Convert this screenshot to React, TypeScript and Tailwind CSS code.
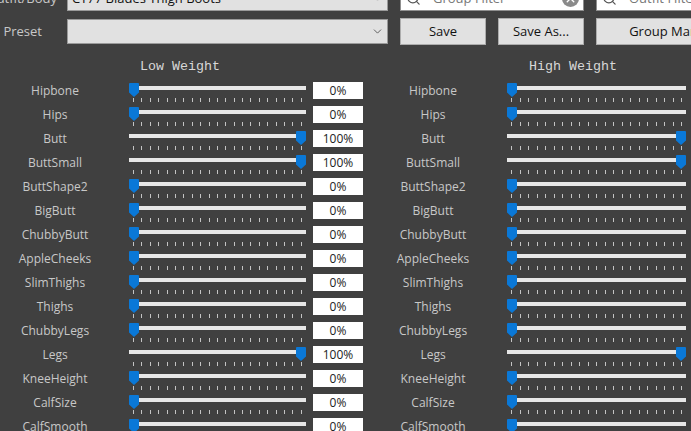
import { Search, X, ChevronDown } from 'lucide-react';

const rows = [
  { name: 'Hipbone', value: 0 },
  { name: 'Hips', value: 0 },
  { name: 'Butt', value: 100 },
  { name: 'ButtSmall', value: 100 },
  { name: 'ButtShape2', value: 0 },
  { name: 'BigButt', value: 0 },
  { name: 'ChubbyButt', value: 0 },
  { name: 'AppleCheeks', value: 0 },
  { name: 'SlimThighs', value: 0 },
  { name: 'Thighs', value: 0 },
  { name: 'ChubbyLegs', value: 0 },
  { name: 'Legs', value: 100 },
  { name: 'KneeHeight', value: 0 },
  { name: 'CalfSize', value: 0 },
  { name: 'CalfSmooth', value: 0 },
];

const ticks = Array.from({ length: 21 }, (_, i) => i);

function Combo({ text }: { text: string }) {
  return (
    <div className="flex h-[25px] w-[321px] shrink-0 items-center justify-between border border-[#9a9a9a] bg-[#e1e1e1] pl-[4px] pr-[3px] text-[13px] leading-none text-[#111]">
      <span>{text}</span>
      <ChevronDown className="h-[13px] w-[13px] text-[#444]" strokeWidth={1.5} />
    </div>
  );
}

function FilterBox({ text, width, clear }: { text: string; width: string; clear?: boolean }) {
  return (
    <div className={`flex h-[25px] shrink-0 items-center border border-[#8f8f8f] bg-white pl-[5px] pr-[4px] text-[13px] text-[#777] ${width}`}>
      <Search className="mr-[12px] h-[15px] w-[15px] text-[#555]" strokeWidth={2} />
      <span className="flex-1 whitespace-nowrap">{text}</span>
      {clear && (
        <span className="flex h-[17px] w-[17px] items-center justify-center rounded-full bg-[#8a8a8a]">
          <X className="h-[13px] w-[13px] text-white" strokeWidth={2.5} />
        </span>
      )}
    </div>
  );
}

function ActionButton({ text, width }: { text: string; width: string }) {
  return (
    <div className={`flex h-[27px] shrink-0 items-center justify-center whitespace-nowrap border border-[#adadad] bg-[#e1e1e1] text-[13px] text-[#111] ${width}`}>
      {text}
    </div>
  );
}

function Slider({ full, width }: { full: boolean; width: string }) {
  return (
    <div className={`flex shrink-0 flex-col ${width}`}>
      <div className={`flex h-[14px] items-start ${full ? 'flex-row-reverse' : ''}`}>
        <svg width="10" height="14" viewBox="0 0 10 14" className="shrink-0">
          <path d="M0 1 Q0 0 1 0 H9 Q10 0 10 1 V9.5 L5 14 L0 9.5 Z" fill="#0a78d7" />
        </svg>
        <div className="mt-[3px] h-[4px] flex-1 bg-[#e7e7e7]" />
      </div>
      <div className="mt-[1px] flex justify-between px-[4px]">
        {ticks.map((t) => (
          <span key={t} className="h-[4px] w-px bg-[#c4c4c4]" />
        ))}
      </div>
    </div>
  );
}

function SliderRow({ name, value, showBox }: { name: string; value: number; showBox: boolean }) {
  return (
    <div className="flex h-[24px] items-start">
      <div className="w-[110px] shrink-0 text-center text-[12px] leading-[17px] text-[#c8c8c8]">{name}</div>
      <div className="ml-[19px] mt-[1px]">
        <Slider full={value === 100} width={showBox ? 'w-[177px]' : 'w-[179px]'} />
      </div>
      {showBox && (
        <div className="ml-[7px] flex h-[17px] w-[50px] shrink-0 items-center justify-center bg-white text-[12px] leading-none text-[#222]">
          {value}%
        </div>
      )}
    </div>
  );
}

function WeightColumn({ title, titleClass, showBox }: { title: string; titleClass: string; showBox: boolean }) {
  return (
    <div className={showBox ? 'w-[378px] shrink-0' : 'flex-1'}>
      <div className={`font-['Liberation_Mono',monospace] text-[13.33px] leading-[16px] text-[#d8d8d8] ${titleClass}`}>
        {title}
      </div>
      <div className="mt-[7px]">
        {rows.map((r) => (
          <SliderRow key={r.name} name={r.name} value={r.value} showBox={showBox} />
        ))}
      </div>
    </div>
  );
}

export default function App() {
  return (
    <div className="h-[431px] w-[691px] overflow-hidden bg-[#404040] font-['Open_Sans','Noto_Sans',sans-serif]">
      <div className="-mt-[14px] flex items-center">
        <div className="flex w-[57px] shrink-0 justify-end whitespace-nowrap text-[13px] text-[#c8c8c8]">Outfit/Body</div>
        <div className="ml-[10px]">
          <Combo text="CT77 Blades Thigh Boots" />
        </div>
        <div className="ml-[12px] flex gap-[12px]">
          <FilterBox text="Group Filter" width="w-[184px]" clear />
          <FilterBox text="Outfit Filter" width="w-[184px]" />
        </div>
      </div>
      <div className="mt-[7px] flex items-center">
        <div className="w-[42px] shrink-0 text-right text-[13px] text-[#c8c8c8]">Preset</div>
        <div className="ml-[25px]">
          <Combo text="" />
        </div>
        <div className="ml-[12px] flex gap-[12px]">
          <ActionButton text="Save" width="w-[86px]" />
          <ActionButton text="Save As..." width="w-[86px]" />
          <ActionButton text="Group Manager" width="w-[162px]" />
        </div>
      </div>
      <div className="mt-[14px] flex">
        <WeightColumn title="Low Weight" titleClass="ml-[140px]" showBox />
        <WeightColumn title="High Weight" titleClass="ml-[151px]" showBox={false} />
      </div>
    </div>
  );
}
